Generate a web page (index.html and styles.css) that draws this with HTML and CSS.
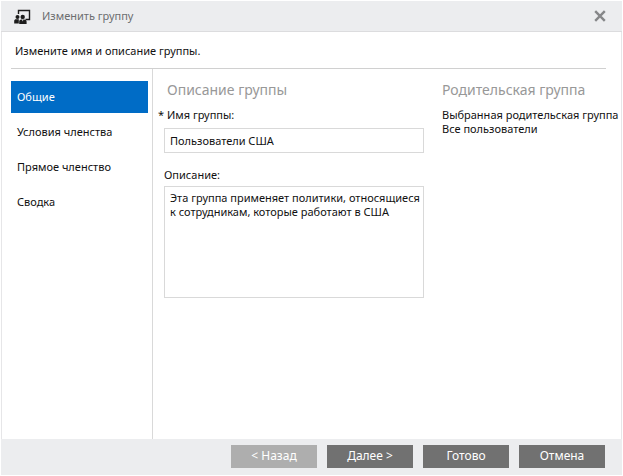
FILE: index.html
```html
<!DOCTYPE html>
<html lang="ru">
<head>
<meta charset="utf-8">
<title>Изменить группу</title>
<link rel="stylesheet" href="styles.css">
</head>
<body>
<form class="dialog">
  <header class="titlebar">
    <svg class="group-icon" viewBox="0 0 18 16" aria-hidden="true">
      <path d="M5.500 6V2.500h11v9h-4" fill="none" stroke="#1c1c1c" stroke-width="1.400"/>
      <g fill="#1c1c1c">
        <circle cx="4.500" cy="9" r="2"/>
        <path d="M1.200 15.500v-2.500c0-1.200.8-1.800 2-1.800h2.600v4.300z"/>
        <circle cx="9.700" cy="8.900" r="2.200"/>
        <path d="M6.200 16v-2.200c0-1.600 1-2.400 2.400-2.400h2.300c1.700 0 2.700.8 2.700 2.400v2.200z"/>
      </g>
      <path d="M9 11.500h1.400l-.7 2z" fill="#ecedef"/>
    </svg>
    <h1 class="title">Изменить группу</h1>
    <button class="close" type="button" aria-label="Закрыть">
      <svg viewBox="0 0 12 12" aria-hidden="true"><path d="M1.200 1.200l9.600 9.600M10.800 1.200l-9.600 9.600" stroke="#868789" stroke-width="2.400"/></svg>
    </button>
  </header>
  <div class="content">
    <p class="intro">Измените имя и описание группы.</p>
    <div class="columns">
      <nav class="steps">
        <a class="step active" href="#general" aria-current="step">Общие</a>
        <a class="step" href="#rules">Условия членства</a>
        <a class="step" href="#direct">Прямое членство</a>
        <a class="step" href="#summary">Сводка</a>
      </nav>
      <section class="details">
        <h2 class="heading">Описание группы</h2>
        <label class="label required" for="name">Имя группы:</label>
        <input class="field" id="name" type="text" value="Пользователи США">
        <label class="label" for="description">Описание:</label>
        <textarea class="field area" id="description">Эта группа применяет политики, относящиеся к сотрудникам, которые работают в США</textarea>
      </section>
      <section class="parent">
        <h2 class="heading">Родительская группа</h2>
        <p class="parent-text">Выбранная родительская группа<br>Все пользователи</p>
      </section>
    </div>
  </div>
  <footer class="actions">
    <button class="button" type="button" disabled>&lt; Назад</button>
    <button class="button" type="button">Далее &gt;</button>
    <button class="button" type="button">Готово</button>
    <button class="button" type="button">Отмена</button>
  </footer>
</form>
</body>
</html>
```
FILE: styles.css
```css
* {
  box-sizing: border-box;
}

body {
  margin: 0;
  padding: 1px;
  background: #fff;
  color: #111;
  font: 11px/14px "Noto Sans", "Open Sans", sans-serif;
}

h1,
h2,
p {
  margin: 0;
  font-weight: 400;
}

.dialog {
  display: flex;
  flex-direction: column;
  min-height: calc(100vh - 2px);
}

.titlebar {
  display: flex;
  align-items: center;
  height: 31px;
  padding: 0 16px 0 12px;
  background: #ecedef;
  border-bottom: 1px solid #dcdcde;
}

.group-icon {
  width: 18px;
  height: 16px;
}

.title {
  flex: 1;
  margin-left: 11px;
  color: #6c6d6f;
  font-size: 11px;
}

.close {
  display: flex;
  padding: 0;
  border: 0;
  background: none;
}

.close svg {
  width: 12px;
  height: 12px;
}

.content {
  flex: 1;
  display: flex;
  flex-direction: column;
  border: solid #e6e6e8;
  border-width: 0 1px;
}

.intro {
  margin: 0 15px 0 9px;
  padding: 12px 0 10px 4px;
  border-bottom: 1px solid #d0d0d0;
}

.columns {
  flex: 1;
  display: flex;
  padding-left: 9px;
}

.steps {
  display: flex;
  flex-direction: column;
  gap: 3px;
  width: 141px;
  padding: 12px 4px 0 0;
}

.step {
  padding: 9px 6px;
  color: inherit;
  text-decoration: none;
}

.active {
  background: #006cc6;
  color: #fff;
}

.details {
  flex: 1;
  display: flex;
  flex-direction: column;
  padding: 12px 18px 0 11px;
  border-left: 1px solid #d9d9d9;
}

.heading {
  color: #989898;
  font-size: 14px;
  line-height: 18px;
}

.details .heading {
  padding-left: 3px;
}

.label {
  margin: 15px 0 4px;
}

.required {
  margin: 9px 0 6px -6px;
}

.required::before {
  content: "* ";
}

.field {
  width: 100%;
  height: 25px;
  margin: 0;
  padding: 0 0 0 5px;
  border: 1px solid #d9d9d9;
  border-radius: 0;
  background: #fff;
  color: inherit;
  font: inherit;
}

.area {
  height: 112px;
  padding-top: 4px;
  resize: none;
}

.parent {
  width: 179px;
  padding-top: 12px;
}

.parent-text {
  margin-top: 9px;
  white-space: nowrap;
}

.actions {
  display: flex;
  justify-content: flex-end;
  gap: 10px;
  padding: 6px 17px 7px;
  background: #ecedef;
}

.button {
  width: 86px;
  height: 23px;
  padding: 0 0 2px;
  border: 0;
  background: #717171;
  color: #fff;
  font: inherit;
  font-size: 12px;
}

.button:disabled {
  background: #aeaeae;
}
```
